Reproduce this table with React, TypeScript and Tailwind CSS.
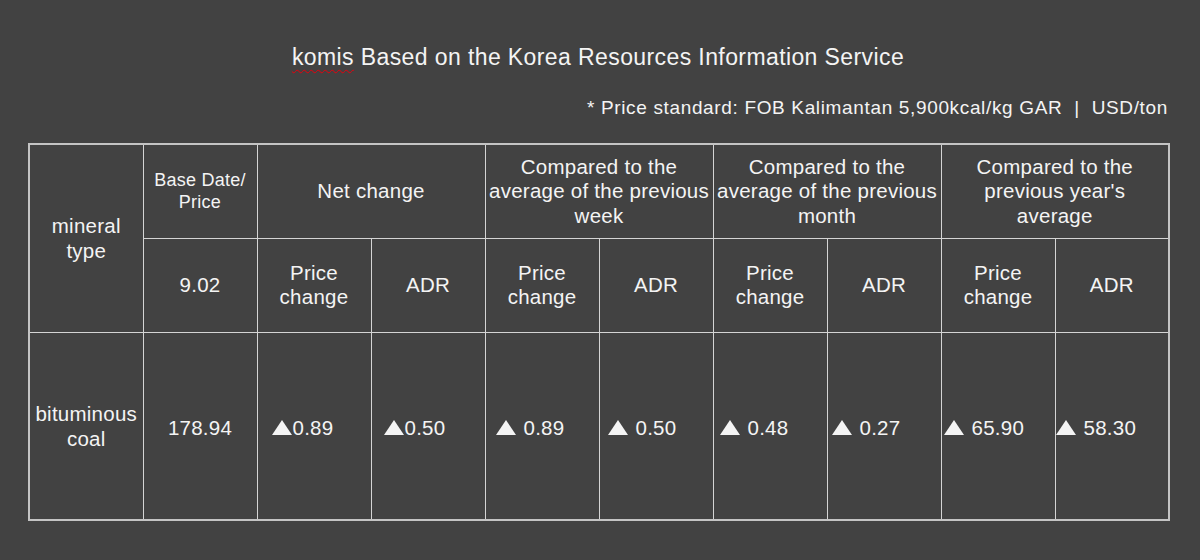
const font = { fontFamily: '"Liberation Sans", Arial, sans-serif' };

type Cell = { value: string; gap: boolean; pad: string };

const values: Cell[] = [
  { value: '0.89', gap: false, pad: 'pl-[14px]' },
  { value: '0.50', gap: false, pad: 'pl-[12px]' },
  { value: '0.89', gap: true, pad: 'pl-[10px]' },
  { value: '0.50', gap: true, pad: 'pl-[8px]' },
  { value: '0.48', gap: true, pad: 'pl-[6px]' },
  { value: '0.27', gap: true, pad: 'pl-[4px]' },
  { value: '65.90', gap: true, pad: 'pl-[2px]' },
  { value: '58.30', gap: true, pad: 'pl-[0px]' },
];

const groups: string[][] = [
  ['Net change'],
  ['Compared to the', 'average of the previous', 'week'],
  ['Compared to the', 'average of the previous', 'month'],
  ['Compared to the', "previous year's", 'average'],
];

function Up() {
  return (
    <svg width="20" height="15" viewBox="0 0 20 15" className="inline-block align-baseline">
      <polygon points="10,0 20,15 0,15" fill="#f4f4f4" />
    </svg>
  );
}

export default function App() {
  const td = 'border border-[#d4d4d4] text-center align-middle';

  return (
    <div className="w-[1200px] h-[560px] bg-[#424242] text-[#f4f4f4] pt-[43px]" style={font}>
      <div className="ml-[28px] w-[1140px]">
        <h1 className="text-center text-[23px] leading-[28px] tracking-[0.4px] font-normal">
          <span className="underline decoration-wavy decoration-red-600 decoration-1 underline-offset-4">komis</span> Based on
          the Korea Resources Information Service
        </h1>
        <p className="mt-[25px] text-right text-[19px] leading-[24px] tracking-[0.65px] whitespace-pre">
          * Price standard: FOB Kalimantan 5,900kcal/kg GAR  |  USD/ton
        </p>

        <table className="mt-[23px] w-[1140px] table-fixed border-collapse border-2 border-[#c4c4c4] text-[20.5px] leading-[24.5px] tracking-[0.25px]">
          <colgroup>
            {Array.from({ length: 10 }).map((_, i) => (
              <col key={i} className="w-[114px]" />
            ))}
          </colgroup>
          <tbody>
            <tr className="h-[94px]">
              <td rowSpan={2} className={`${td} leading-[25px]`}>
                mineral
                <br />
                type
              </td>
              <td className={`${td} text-[18px] leading-[22px]`}>
                Base Date/
                <br />
                Price
              </td>
              {groups.map((g) => (
                <td key={g.join()} colSpan={2} className={`${td} whitespace-nowrap`}>
                  {g.map((line, i) => (
                    <div key={i}>{line}</div>
                  ))}
                </td>
              ))}
            </tr>
            <tr className="h-[94px]">
              <td className={td}>9.02</td>
              {groups.map((g) => [
                <td key={g.join() + 'p'} className={td}>
                  Price
                  <br />
                  change
                </td>,
                <td key={g.join() + 'a'} className={td}>
                  ADR
                </td>,
              ])}
            </tr>
            <tr className="h-[188px]">
              <td className={`${td} leading-[25px]`}>
                bituminous
                <br />
                coal
              </td>
              <td className={`${td} pt-[4px]`}>178.94</td>
              {values.map((v, i) => (
                <td key={i} className={`${td} text-left whitespace-nowrap pt-[4px] ${v.pad}`}>
                  <Up />
                  <span className={v.gap ? 'ml-[8px]' : 'ml-[1px]'}>{v.value}</span>
                </td>
              ))}
            </tr>
          </tbody>
        </table>
      </div>
    </div>
  );
}
